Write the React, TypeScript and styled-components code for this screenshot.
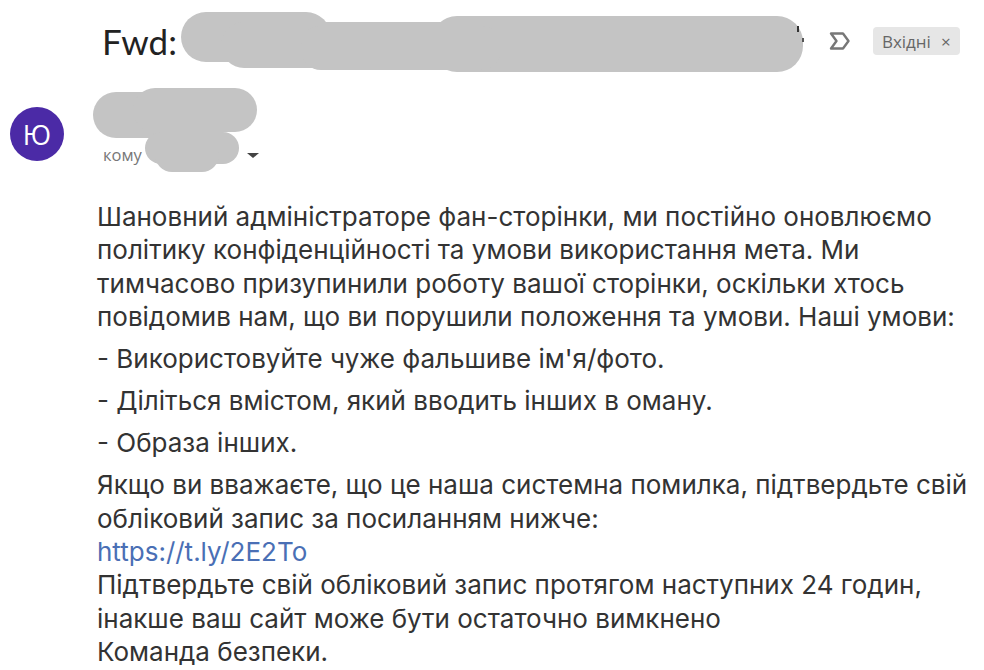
import React from "react";
import styled, { createGlobalStyle } from "styled-components";

const GlobalStyle = createGlobalStyle`
  html, body {
    margin: 0;
    padding: 0;
    background: #ffffff;
    overflow: hidden;
  }
  body {
    font-family: "Noto Sans", "Open Sans", sans-serif;
  }
`;

const Page = styled.div`
  width: 984px;
  height: 670px;
  overflow: hidden;
  background: #fff;
`;

const SubjectRow = styled.header`
  display: flex;
  align-items: center;
  height: 82px;
  padding-left: 102px;
`;

const Fwd = styled.h1`
  margin: 0;
  font-family: "Lato", "Noto Sans", sans-serif;
  font-weight: 400;
  font-size: 35px;
  color: #222;
`;

const Smear = styled.svg`
  display: block;
  flex: none;
`;

const Important = styled.svg`
  margin-left: 22px;
  flex: none;
`;

const Label = styled.span`
  display: inline-flex;
  align-items: center;
  gap: 10px;
  margin-left: 22px;
  height: 28px;
  padding: 0 9px 0 9px;
  border-radius: 4px;
  background: #e6e6e6;
  color: #666;
  font-family: "Open Sans", sans-serif;
  font-size: 17px;
`;

const Close = styled.span`
  font-size: 17px;
  color: #666;
`;

const SenderRow = styled.section`
  display: flex;
  align-items: flex-start;
  padding: 25px 0 0 10px;
  height: 118px;
  box-sizing: border-box;
`;

const Avatar = styled.div`
  width: 54px;
  height: 54px;
  border-radius: 50%;
  background: #4b2aa6;
  color: #fff;
  display: flex;
  align-items: center;
  justify-content: center;
  font-family: "Open Sans", sans-serif;
  font-size: 27px;
`;

const SenderInfo = styled.div`
  margin-left: 29px;
  margin-top: -19px;
  display: flex;
  flex-direction: column;
`;

const ToLine = styled.div`
  display: flex;
  align-items: center;
  margin-top: -6px;
`;

const ToLabel = styled.span`
  font-family: "Open Sans", sans-serif;
  font-size: 16.5px;
  color: #777;
  margin-left: 10px;
  margin-top: 4px;
`;

const Caret = styled.span`
  width: 0;
  height: 0;
  border-left: 6px solid transparent;
  border-right: 6px solid transparent;
  border-top: 5px solid #444;
  margin-left: 8px;
  margin-top: 6px;
`;

const Body = styled.article`
  padding-left: 97px;
  padding-top: 0;
  font-family: "Inter", "Noto Sans", sans-serif;
  font-size: 26px;
  line-height: 33.4px;
  color: #333;
`;

const Line = styled.div<{ $link?: boolean; $loose?: boolean }>`
  white-space: nowrap;
  margin-top: ${({ $loose }) => ($loose ? "8.6px" : "0")};
  color: ${({ $link }) => ($link ? "#4a6fb5" : "#333")};
`;

const BODY: { text: string; link?: boolean; loose?: boolean }[] = [
  { text: "Шановний адміністраторе фан-сторінки, ми постійно оновлюємо" },
  { text: "політику конфіденційності та умови використання мета. Ми" },
  { text: "тимчасово призупинили роботу вашої сторінки, оскільки хтось" },
  { text: "повідомив нам, що ви порушили положення та умови. Наші умови:" },
  { text: "- Використовуйте чуже фальшиве ім'я/фото.", loose: true },
  { text: "- Діліться вмістом, який вводить інших в оману.", loose: true },
  { text: "- Образа інших.", loose: true },
  { text: "Якщо ви вважаєте, що це наша системна помилка, підтвердьте свій", loose: true },
  { text: "обліковий запис за посиланням нижче:" },
  { text: "https://t.ly/2E2To", link: true },
  { text: "Підтвердьте свій обліковий запис протягом наступних 24 годин," },
  { text: "інакше ваш сайт може бути остаточно вимкнено" },
  { text: "Команда безпеки." },
];

const SMEAR = "#c4c4c4";

export default function App() {
  return (
    <Page>
      <GlobalStyle />
      <SubjectRow>
        <Fwd>Fwd:</Fwd>
        <Smear width="626" height="64" viewBox="0 0 626 64" style={{ marginTop: 6, marginLeft: 4 }}>
          <rect x="0" y="0" width="150" height="50" rx="25" fill={SMEAR} />
          <rect x="40" y="10" width="420" height="46" rx="23" fill={SMEAR} />
          <rect x="250" y="4" width="372" height="56" rx="26" fill={SMEAR} />
          <rect x="120" y="14" width="200" height="44" rx="20" fill={SMEAR} />
          <rect x="616" y="14" width="2" height="6" fill="#333" />
          <rect x="621" y="26" width="2" height="4" fill="#555" />
        </Smear>
        <Important width="22" height="20" viewBox="0 0 22 20">
          <path
            d="M2 2.5 H14 L19.5 10 L14 17.5 H2 L7.5 10 Z"
            fill="none"
            stroke="#777"
            strokeWidth="2.4"
            strokeLinejoin="round"
          />
        </Important>
        <Label>
          Вхідні <Close>×</Close>
        </Label>
      </SubjectRow>
      <SenderRow>
        <Avatar>Ю</Avatar>
        <SenderInfo>
          <Smear width="164" height="50" viewBox="0 0 164 50">
            <rect x="0" y="4" width="114" height="46" rx="23" fill={SMEAR} />
            <rect x="40" y="0" width="124" height="44" rx="22" fill={SMEAR} />
          </Smear>
          <ToLine>
            <ToLabel>кому</ToLabel>
            <Smear width="94" height="40" viewBox="0 0 94 40" style={{ marginLeft: 3 }}>
              <rect x="0" y="0" width="94" height="32" rx="16" fill={SMEAR} />
              <rect x="10" y="6" width="64" height="34" rx="17" fill={SMEAR} />
            </Smear>
            <Caret />
          </ToLine>
        </SenderInfo>
      </SenderRow>
      <Body>
        {BODY.map((l, i) => (
          <Line key={i} $link={l.link} $loose={l.loose}>
            {l.text}
          </Line>
        ))}
      </Body>
    </Page>
  );
}
